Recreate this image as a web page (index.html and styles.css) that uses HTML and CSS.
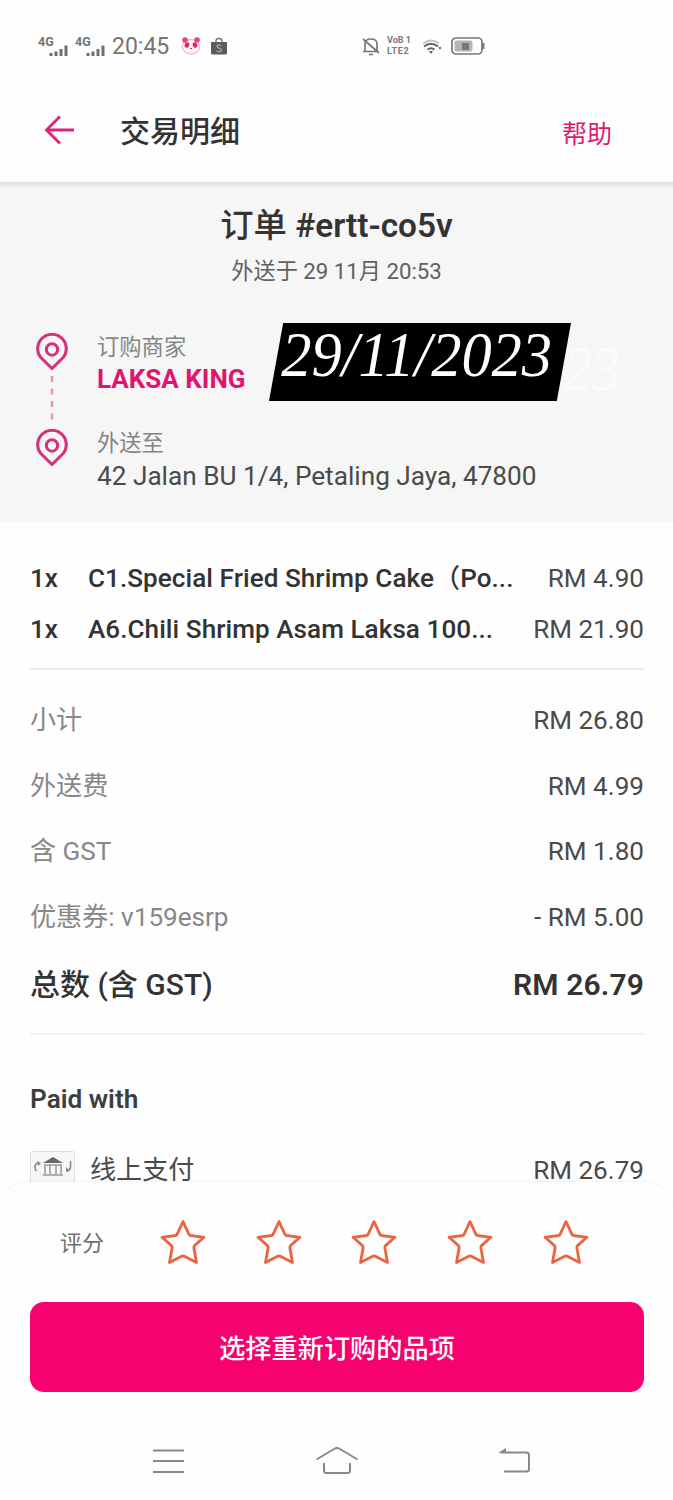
FILE: index.html
```html
<!DOCTYPE html>
<html lang="zh-CN">
<head>
<meta charset="utf-8">
<title>交易明细</title>
<link rel="stylesheet" href="styles.css">
</head>
<body>
<svg class="defs" aria-hidden="true">
  <symbol id="pin" viewBox="0 0 34 38"><path d="M17 35.5 L5.8 24.5 A14.3 14.3 0 1 1 28.2 24.5 Z" stroke-linejoin="round"/><circle cx="17" cy="16.5" r="5.7"/></symbol>
  <symbol id="star" viewBox="0 0 46 46"><path d="M23 2.5 L28.8 15.2 Q29.3 16.3 30.5 16.5 L44 18.3 L34.500 26.6 Q33.6 27.6 33.900 29 L36.5 43.5 L24.3 37.3 Q23 36.7 21.7 37.3 L9.5 43.5 L12.100 29 Q12.4 27.6 11.500 26.6 L2 18.3 L15.5 16.5 Q16.7 16.3 17.2 15.2 Z"/></symbol>
  <symbol id="signal" viewBox="0 0 20 12"><path d="M1 9h3v3H1zM6 7.5h3V12H6zM11 5h3v7h-3zM16 1.5h3V12h-3z"/></symbol>
</svg>
<div class="screen">
  <div class="status">
    <div class="status-left">
      <span class="network"><b>4G</b><svg><use href="#signal"/></svg></span>
      <span class="network"><b>4G</b><svg><use href="#signal"/></svg></span>
      <span class="clock">20:45</span>
      <svg class="panda" viewBox="0 0 20 20"><path d="M3 6Q10 1 17 6L19 11Q17 18 10 18Q3 18 1 11Z" fill="#fff0f6" stroke="#f4a3c5"/><circle cx="4" cy="4" r="2.8" fill="#e0457f"/><circle cx="16" cy="4" r="2.8" fill="#e0457f"/><ellipse cx="6" cy="9" rx="2.2" ry="2.8" fill="#d8286c" transform="rotate(25 6 9)"/><ellipse cx="14" cy="9" rx="2.2" ry="2.8" fill="#d8286c" transform="rotate(-25 14 9)"/><path d="M8.7 12h2.6L10 13.5z" fill="#a32457"/></svg>
      <svg class="bag" viewBox="0 0 16 18"><path d="M5 6V4Q5 1.5 8 1.5T11 4v2" fill="none" stroke="#777" stroke-width="1.4"/><path d="M0 5h16v11q0 1.5-1.5 1.5h-13Q0 17.500 0 16z" fill="#5b5b5b"/><path d="M10.500 8.500Q6 7 6 9.500c0 2 4.500 1.200 4.500 3.500q0 2.500-5 1" fill="none" stroke="#aaa" stroke-width="1.300"/></svg>
    </div>
    <div class="status-right">
      <svg class="mute" viewBox="0 0 18 20" fill="none" stroke="#777" stroke-width="1.700"><path d="M3 15V8q0-5 6-5t6 5v7M1 15.500h14M7 18.500h4M1 3l16 14"/></svg>
      <span class="volte"><span>VoB 1</span><span>LTE2</span></span>
      <svg class="wifi" viewBox="0 0 22 18" fill="none" stroke="#666" stroke-width="2"><path d="M2 6.500q8-6 16 0" stroke="#c4c4c4"/><path d="M3 9.500q7-5.500 14 0M6.500 12.600q3.500-2.600 7 0"/><path d="M8 14h4l-2 3z" fill="#666" stroke="none"/><circle cx="19" cy="11" r="1.300" fill="#777" stroke="none"/></svg>
      <svg class="battery" viewBox="0 0 34 18"><rect x="1" y="1" width="30" height="16" rx="4" fill="none" stroke="#777" stroke-width="1.700"/><rect x="3.500" y="3.500" width="18" height="11" rx="2" fill="#b5b5b5"/><path d="M11 6h7v7h-7z" fill="#777"/><path d="M32.500 6v6" stroke="#777" stroke-width="2"/></svg>
    </div>
  </div>
  <header class="header">
    <svg class="back" viewBox="0 0 30 30"><path d="M15 1.500L1.500 15 15 28.500M1.500 15H29"/></svg>
    <h1>交易明细</h1>
    <a class="help">帮助</a>
  </header>
  <section class="order">
    <h2>订单 <span>#ertt-co5v</span></h2>
    <p class="when">外送于 29 11月 20:53</p>
    <div class="route">
      <div class="track"><svg class="pin"><use href="#pin"/></svg><svg class="dots" viewBox="0 0 4 58"><path d="M2 5V54" stroke-dasharray="6 6.500"/></svg><svg class="pin"><use href="#pin"/></svg></div>
      <div class="places">
        <div class="label">订购商家</div>
        <div class="vendor">LAKSA KING</div>
        <div class="label second">外送至</div>
        <div class="address">42 Jalan BU 1/4, Petaling Jaya, 47800</div>
      </div>
    </div>
    <div class="ghost">23</div>
    <div class="stamp"><span>29/11/2023</span></div>
  </section>
  <main class="receipt">
    <div class="items">
      <div class="item"><span class="qty">1x</span><span class="name">C1.Special Fried Shrimp Cake（Po...</span><span class="price">RM 4.90</span></div>
      <div class="item"><span class="qty">1x</span><span class="name">A6.Chili Shrimp Asam Laksa 100...</span><span class="price">RM 21.90</span></div>
    </div>
    <div class="sums">
      <div class="row"><span>小计</span><span class="price">RM 26.80</span></div>
      <div class="row"><span>外送费</span><span class="price">RM 4.99</span></div>
      <div class="row"><span>含 GST</span><span class="price">RM 1.80</span></div>
      <div class="row"><span>优惠券: v159esrp</span><span class="price">- RM 5.00</span></div>
      <div class="row total"><span>总数 (含 GST)</span><span class="grand">RM 26.79</span></div>
    </div>
    <h3>Paid with</h3>
    <div class="payment">
      <svg class="bank" viewBox="0 0 46 36"><rect x=".5" y=".5" width="44" height="35" rx="2" fill="#f7f7f7" stroke="#ddd"/><path d="M13 12L23 6l10 6z" fill="#666"/><path d="M15 14v9M20 14v9M26 14v9M31 14v9M14 14h18M13 24h20" stroke="#999" stroke-width="1.500"/><path d="M9 12q-4 0-4 4 0 2.500 1.500 4M40.500 10v6q0 3-4 3.500" fill="none" stroke="#888" stroke-width="1.600"/><path d="M7 10l4 2-3 3zM36 16v5l4-1z" fill="#888"/></svg>
      <span class="method">线上支付</span><span class="price">RM 26.79</span>
    </div>
  </main>
  <section class="sheet">
    <div class="rating"><span class="rating-label">评分</span><div class="stars"><svg><use href="#star"/></svg><svg><use href="#star"/></svg><svg><use href="#star"/></svg><svg><use href="#star"/></svg><svg><use href="#star"/></svg></div></div>
    <button class="reorder">选择重新订购的品项</button>
  </section>
  <nav class="nav">
    <svg viewBox="0 0 44 30"><path d="M6 3.500h31M6 14h31M6 25h31"/></svg>
    <svg viewBox="0 0 44 30"><path d="M1.500 12.500L19 2q3-1.800 6 0l17.500 10.500M9 16v7.500Q9 26 11.500 26h21q2.500 0 2.500-2.500V16"/></svg>
    <svg viewBox="0 0 44 30"><path d="M8 5.500h25.500q2.500 0 2.500 2.500V22q0 2.500-2.500 2.500H11"/><path d="M5 6l8-5v5z" fill="#888" stroke="none"/></svg>
  </nav>
</div>
</body>
</html>
```
FILE: styles.css
```css
* { box-sizing: border-box; }
body { margin: 0; background: #fefefe; }
h1, h2, h3, p { margin: 0; }
.defs { position: absolute; width: 0; height: 0; }
.screen {
  width: 673px; height: 1500px; overflow: hidden;
  display: flex; flex-direction: column;
  font-family: Roboto, "Noto Sans CJK SC", sans-serif;
  color: #4a4a4a;
}
.screen > * { flex: none; }

.status { height: 92px; display: flex; align-items: center; padding-left: 38px; }
.status-left { display: flex; align-items: center; width: 324px; }
.network { width: 32px; height: 20px; margin-right: 5px; display: grid; }
.network b { grid-area: 1 / 1; font: bold 12.5px/11px Roboto, sans-serif; color: #737373; }
.network svg { grid-area: 1 / 1; width: 23px; height: 12px; fill: #707070; align-self: end; justify-self: end; }
.clock { font-size: 23px; line-height: 28px; color: #757575; width: 69px; padding-top: 2px; }
.panda { width: 20px; height: 20px; }
.bag { width: 16px; height: 18px; margin-left: 10px; }
.status-right { display: flex; align-items: center; }
.mute { width: 18px; height: 20px; }
.volte { margin-left: 7px; width: 27px; display: flex; flex-direction: column; font: bold 9px/11px Roboto, sans-serif; color: #777; white-space: nowrap; }
.volte span:last-child { letter-spacing: .7px; }
.wifi { width: 22px; height: 18px; margin-left: 7px; }
.battery { width: 34px; height: 18px; margin-left: 8px; }

.header {
  height: 90px; display: flex; align-items: center;
  padding: 0 61px 12px 45px;
}
.back { width: 30px; height: 30px; fill: none; stroke: #e0237a; stroke-width: 2.8; margin-top: -2px; }
.header h1 { margin: 2px 0 0 45px; font-size: 30px; line-height: 40px; font-weight: 500; color: #333; }
.help { margin-left: auto; font-size: 25px; line-height: 40px; color: #dc1a70; margin-top: 8px; }

.order { position: relative; height: 340px; background: linear-gradient(#e0e0e0, #e7e7e7 3px, #f6f6f6 6px); padding-top: 24px; }
.order h2 { text-align: center; font-size: 33.4px; line-height: 40px; font-weight: 500; color: #333; }
.order h2 span { font-weight: 600; }
.when { text-align: center; margin-top: 10px; font-size: 22.2px; line-height: 30px; color: #606060; }
.route { display: flex; padding: 47px 0 0 35px; }
.track { width: 34px; display: flex; flex-direction: column; align-items: center; }
.pin { width: 34px; height: 38px; fill: none; stroke: #d62e7b; stroke-width: 3; }
.dots { width: 4px; height: 58px; fill: none; stroke: #e691b5; stroke-width: 2.5; }
.places { margin: -1px 0 0 28px; }
.label { font-size: 22.3px; line-height: 30px; color: #858585; }
.label.second { margin-top: 32px; }
.vendor { font-size: 26px; line-height: 34px; font-weight: 700; color: #e0156f; }
.address { font-size: 26.2px; line-height: 36px; }
.stamp {
  position: absolute; left: 269px; top: 141px; width: 302px; height: 78px;
  background: #000; clip-path: polygon(4.7% 0, 100% 0, 95.3% 100%, 0 100%);
}
.stamp span, .ghost { font: italic 64px/72px "Liberation Serif", serif; color: #fff; white-space: nowrap; display: block; transform-origin: 0 0; }
.stamp span { margin-top: -4px; padding-left: 13px; transform: scaleX(.944); }
.ghost { position: absolute; left: 563px; top: 151px; transform: scaleX(.9); opacity: .65; }

.receipt { height: 660px; padding: 31px 29px 0 30px; }
.items { border-bottom: 2px solid #ebebeb; height: 117px; }
.item { display: flex; height: 51px; line-height: 51px; font-size: 26.1px; }
.qty { width: 58px; font-weight: 500; color: #333; }
.name { font-weight: 500; color: #333; white-space: nowrap; letter-spacing: .05px; }
.price { margin-left: auto; white-space: nowrap; }
.sums { height: 365px; padding-top: 17px; border-bottom: 2px solid #f1f1f1; }
.row { display: flex; height: 65.6px; line-height: 66.6px; font-size: 26.1px; color: #888; }
.row .price { color: #4a4a4a; }
.row.total { justify-content: space-between; height: 71px; line-height: 71px; font-size: 30px; font-weight: 500; color: #333; }
.grand { font-weight: 600; letter-spacing: .15px; }
.receipt h3 { margin-top: 46px; font-size: 26.2px; line-height: 36px; font-weight: 600; color: #3e3e3e; }
.payment { display: flex; margin-top: 34px; font-size: 26.1px; line-height: 38px; }
.bank { width: 46px; height: 36px; }
.method { margin-left: 14px; }

.sheet { position: relative; height: 240px; background: #fefefe; border-radius: 28px 28px 0 0; box-shadow: 0 -1px 2px rgba(0, 0, 0, .05); padding: 36px 30px 0; }
.rating { display: flex; align-items: center; height: 48px; padding-left: 30px; font-size: 22px; line-height: 30px; color: #6e6e6e; }
.rating-label { padding-top: 3px; }
.stars { display: flex; gap: 49.7px; margin-left: 56px; }
.stars svg { width: 46px; height: 46px; fill: none; stroke: #eb6442; stroke-width: 2.8; stroke-linejoin: round; }
.reorder { display: block; width: 614px; height: 90px; margin-top: 36px; padding: 3px 0 0; border: 0; border-radius: 14px; background: #f7006f; color: #fff; font: 500 26.2px/40px Roboto, "Noto Sans CJK SC", sans-serif; }
.nav { display: flex; gap: 124px; padding: 25px 0 0 147px; }
.nav svg { width: 44px; height: 30px; fill: none; stroke: #888; stroke-width: 2; }
.nav svg:last-child { margin-left: 10px; }
```
